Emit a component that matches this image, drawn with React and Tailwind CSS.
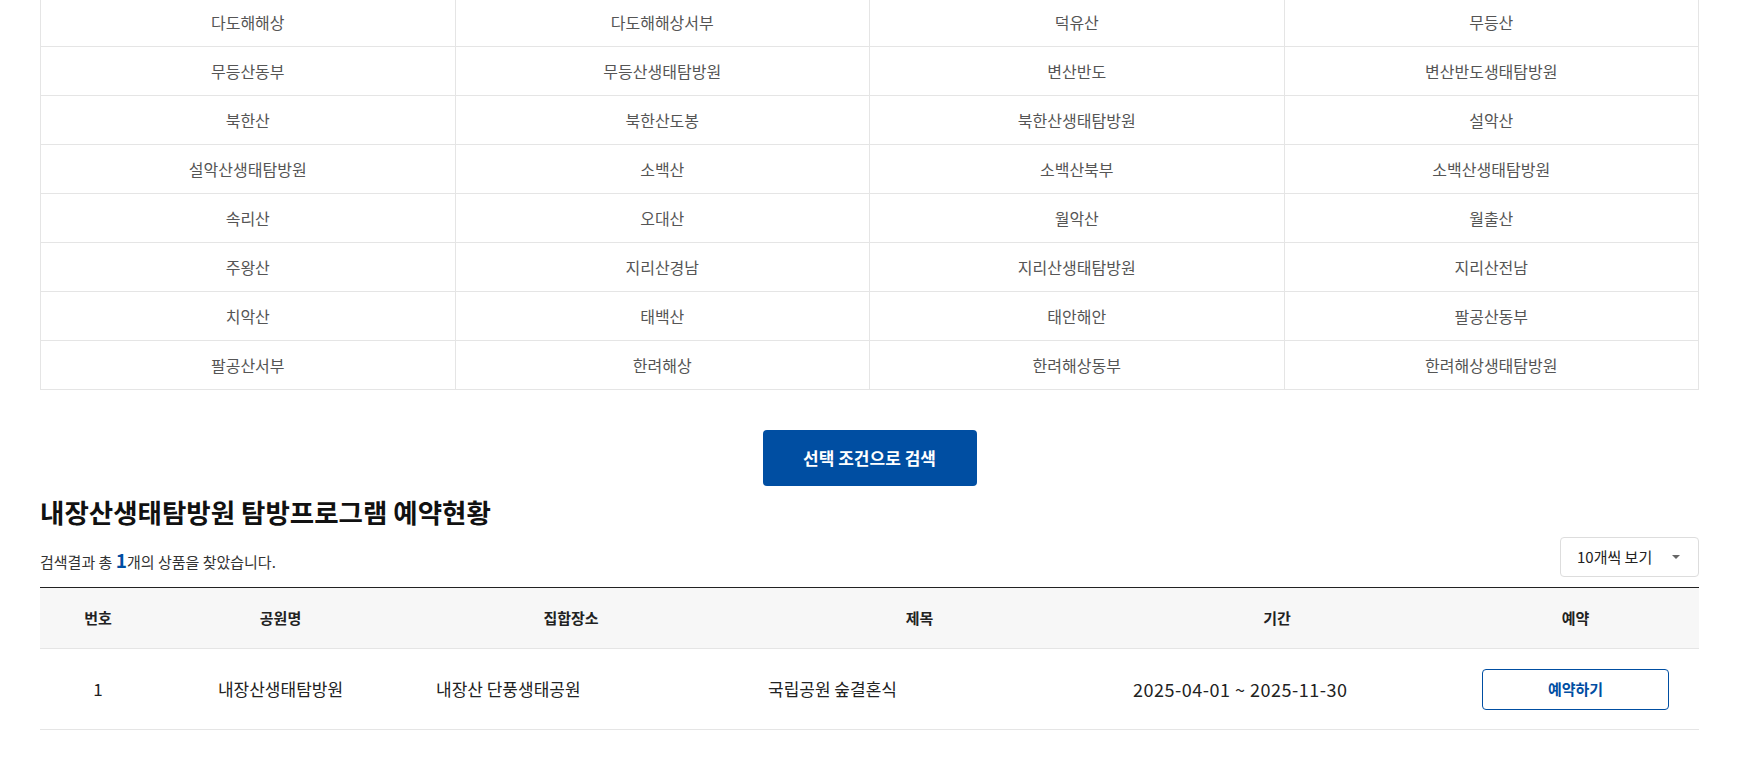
import React from "react";

const parks = [
  "다도해해상", "다도해해상서부", "덕유산", "무등산",
  "무등산동부", "무등산생태탐방원", "변산반도", "변산반도생태탐방원",
  "북한산", "북한산도봉", "북한산생태탐방원", "설악산",
  "설악산생태탐방원", "소백산", "소백산북부", "소백산생태탐방원",
  "속리산", "오대산", "월악산", "월출산",
  "주왕산", "지리산경남", "지리산생태탐방원", "지리산전남",
  "치악산", "태백산", "태안해안", "팔공산동부",
  "팔공산서부", "한려해상", "한려해상동부", "한려해상생태탐방원",
];

const cols = "grid grid-cols-[116px_249px_332px_365px_350px_1fr]";

const App = () => {
  return (
    <div
      className="min-h-screen bg-white pl-[40px] pr-[38px] pb-10"
      style={{ fontFamily: '"Noto Sans CJK KR", "Noto Sans", sans-serif' }}
    >
      {/* park filter grid */}
      <div className="-mt-[3px] grid grid-cols-4 border-t border-l border-[#e5e5e5]">
        {parks.map((name) => (
          <div
            key={name}
            className="flex h-[49px] items-center justify-center border-r border-b border-[#e5e5e5] text-[16px] text-[#555]"
          >
            {name}
          </div>
        ))}
      </div>

      <div className="mt-[40px] flex justify-center">
        <button
          type="button"
          className="h-[56px] w-[214px] rounded-[4px] bg-[#004ea2] text-[17px] font-bold text-white"
        >
          선택 조건으로 검색
        </button>
      </div>

      <h2 className="mt-[8px] text-[26.5px] font-bold leading-[36px] text-[#111]">
        내장산생태탐방원 탐방프로그램 예약현황
      </h2>

      <div className="mt-[7px] flex items-center justify-between">
        <p className="mt-[6px] text-[15px] text-[#333]">
          검색결과 총 <span className="text-[19px] font-bold text-[#004ea2]">1</span>개의 상품을 찾았습니다.
        </p>
        <div className="flex h-[40px] w-[139px] items-center justify-between rounded-[4px] border border-[#dddddd] pl-[16px] pr-[18px] text-[15px] text-[#222]">
          <span>10개씩 보기</span>
          <span className="h-0 w-0 border-x-[4px] border-t-[4px] border-x-transparent border-t-[#666]" />
        </div>
      </div>

      {/* result table */}
      <div className="mt-[10px] border-t border-[#222]">
        <div className={`${cols} h-[61px] items-center border-b border-[#e5e5e5] bg-[#f7f7f7] text-center text-[15px] font-bold text-[#222]`}>
          <div>번호</div>
          <div>공원명</div>
          <div>집합장소</div>
          <div>제목</div>
          <div>기간</div>
          <div>예약</div>
        </div>
        <div className={`${cols} h-[81px] items-center border-b border-[#e5e5e5] text-[17px] text-[#222]`}>
          <div className="text-center">1</div>
          <div className="text-center">내장산생태탐방원</div>
          <div className="pl-[31px]">내장산 단풍생태공원</div>
          <div className="pl-[31px]">국립공원 숲결혼식</div>
          <div className="pl-[31px] text-[18px] tracking-[0.5px]">2025-04-01 ~ 2025-11-30</div>
          <div className="flex justify-center">
            <button
              type="button"
              className="h-[41px] w-[187px] rounded-[4px] border border-[#004ea2] text-[15px] font-bold text-[#004ea2]"
            >
              예약하기
            </button>
          </div>
        </div>
      </div>
    </div>
  );
};

export default App;
